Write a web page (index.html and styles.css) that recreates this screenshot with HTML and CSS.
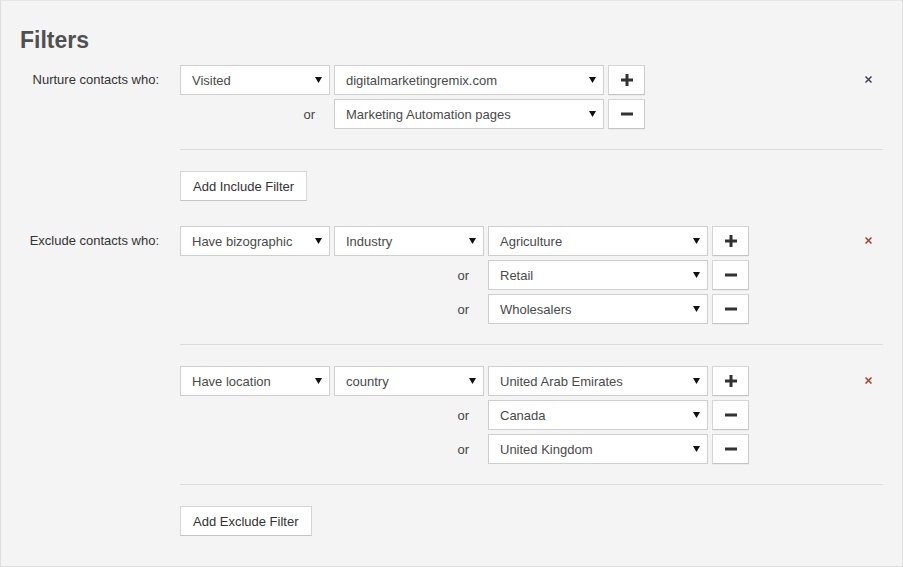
FILE: index.html
```html
<!DOCTYPE html>
<html>
<head>
<meta charset="utf-8">
<link rel="stylesheet" href="styles.css">
</head>
<body>
<div class="page">
  <h1 class="title">Filters</h1>

  <section class="section">
    <div class="label">Nurture contacts who:</div>
    <div class="content">
      <div class="group">
        <div class="grid grid-two">
          <div class="select"><span>Visited</span><svg class="arrow" width="7" height="6" viewBox="0 0 7 6"><polygon points="0,0 7,0 3.5,6" fill="#111"/></svg></div>
          <div class="select"><span>digitalmarketingremix.com</span><svg class="arrow" width="7" height="6" viewBox="0 0 7 6"><polygon points="0,0 7,0 3.5,6" fill="#111"/></svg></div>
          <button class="icon-btn"><svg width="12" height="12" viewBox="0 0 12 12"><rect x="4.5" y="0" width="3" height="12" fill="#333"/><rect x="0" y="4.5" width="12" height="3" fill="#333"/></svg></button>

          <div class="or">or</div>
          <div class="select"><span>Marketing Automation pages</span><svg class="arrow" width="7" height="6" viewBox="0 0 7 6"><polygon points="0,0 7,0 3.5,6" fill="#111"/></svg></div>
          <button class="icon-btn"><svg width="12" height="12" viewBox="0 0 12 12"><rect x="0" y="4.5" width="12" height="3" fill="#333"/></svg></button>
        </div>
        <div class="remove remove-dark"><svg width="7" height="7" viewBox="0 0 7 7"><path d="M0.5 0.5 L6.5 6.5 M6.5 0.5 L0.5 6.5" stroke="currentColor" stroke-width="1.5"/></svg></div>
      </div>
      <hr class="sep">
      <button class="text-btn">Add Include Filter</button>
    </div>
  </section>

  <section class="section section-exclude">
    <div class="label">Exclude contacts who:</div>
    <div class="content">
      <div class="group">
        <div class="grid grid-three">
          <div class="select"><span>Have bizographic</span><svg class="arrow" width="7" height="6" viewBox="0 0 7 6"><polygon points="0,0 7,0 3.5,6" fill="#111"/></svg></div>
          <div class="select"><span>Industry</span><svg class="arrow" width="7" height="6" viewBox="0 0 7 6"><polygon points="0,0 7,0 3.5,6" fill="#111"/></svg></div>
          <div class="select"><span>Agriculture</span><svg class="arrow" width="7" height="6" viewBox="0 0 7 6"><polygon points="0,0 7,0 3.5,6" fill="#111"/></svg></div>
          <button class="icon-btn"><svg width="12" height="12" viewBox="0 0 12 12"><rect x="4.5" y="0" width="3" height="12" fill="#333"/><rect x="0" y="4.5" width="12" height="3" fill="#333"/></svg></button>

          <div class="or or-wide">or</div>
          <div class="select"><span>Retail</span><svg class="arrow" width="7" height="6" viewBox="0 0 7 6"><polygon points="0,0 7,0 3.5,6" fill="#111"/></svg></div>
          <button class="icon-btn"><svg width="12" height="12" viewBox="0 0 12 12"><rect x="0" y="4.5" width="12" height="3" fill="#333"/></svg></button>

          <div class="or or-wide">or</div>
          <div class="select"><span>Wholesalers</span><svg class="arrow" width="7" height="6" viewBox="0 0 7 6"><polygon points="0,0 7,0 3.5,6" fill="#111"/></svg></div>
          <button class="icon-btn"><svg width="12" height="12" viewBox="0 0 12 12"><rect x="0" y="4.5" width="12" height="3" fill="#333"/></svg></button>
        </div>
        <div class="remove"><svg width="7" height="7" viewBox="0 0 7 7"><path d="M0.5 0.5 L6.5 6.5 M6.5 0.5 L0.5 6.5" stroke="currentColor" stroke-width="1.5"/></svg></div>
      </div>
      <hr class="sep">
      <div class="group">
        <div class="grid grid-three">
          <div class="select"><span>Have location</span><svg class="arrow" width="7" height="6" viewBox="0 0 7 6"><polygon points="0,0 7,0 3.5,6" fill="#111"/></svg></div>
          <div class="select"><span>country</span><svg class="arrow" width="7" height="6" viewBox="0 0 7 6"><polygon points="0,0 7,0 3.5,6" fill="#111"/></svg></div>
          <div class="select"><span>United Arab Emirates</span><svg class="arrow" width="7" height="6" viewBox="0 0 7 6"><polygon points="0,0 7,0 3.5,6" fill="#111"/></svg></div>
          <button class="icon-btn"><svg width="12" height="12" viewBox="0 0 12 12"><rect x="4.5" y="0" width="3" height="12" fill="#333"/><rect x="0" y="4.5" width="12" height="3" fill="#333"/></svg></button>

          <div class="or or-wide">or</div>
          <div class="select"><span>Canada</span><svg class="arrow" width="7" height="6" viewBox="0 0 7 6"><polygon points="0,0 7,0 3.5,6" fill="#111"/></svg></div>
          <button class="icon-btn"><svg width="12" height="12" viewBox="0 0 12 12"><rect x="0" y="4.5" width="12" height="3" fill="#333"/></svg></button>

          <div class="or or-wide">or</div>
          <div class="select"><span>United Kingdom</span><svg class="arrow" width="7" height="6" viewBox="0 0 7 6"><polygon points="0,0 7,0 3.5,6" fill="#111"/></svg></div>
          <button class="icon-btn"><svg width="12" height="12" viewBox="0 0 12 12"><rect x="0" y="4.5" width="12" height="3" fill="#333"/></svg></button>
        </div>
        <div class="remove"><svg width="7" height="7" viewBox="0 0 7 7"><path d="M0.5 0.5 L6.5 6.5 M6.5 0.5 L0.5 6.5" stroke="currentColor" stroke-width="1.5"/></svg></div>
      </div>
      <hr class="sep">
      <button class="text-btn">Add Exclude Filter</button>
    </div>
  </section>
</div>
</body>
</html>
```

FILE: styles.css
```css
* { box-sizing: border-box; }

html, body {
  margin: 0;
  padding: 0;
  background: #f4f4f4;
}

body {
  font-family: "Liberation Sans", Arial, sans-serif;
  font-size: 13px;
  color: #333;
}

.page {
  width: 903px;
  height: 567px;
  border: 1px solid #dedede;
  border-top-color: #e6e6e6;
  background: #f4f4f4;
  padding: 25px 19px 0 19px;
}

.title {
  margin: 0 0 11px 0;
  font-size: 23px;
  line-height: 28px;
  font-weight: bold;
  color: #505050;
}

.section {
  display: flex;
  align-items: flex-start;
}

.section-exclude {
  margin-top: 25px;
}

.label {
  width: 160px;
  flex: none;
  padding-right: 21px;
  text-align: right;
  line-height: 30px;
  color: #333;
}

.content {
  flex: 1;
  min-width: 0;
}

.group {
  display: flex;
  align-items: flex-start;
}

.grid {
  display: grid;
  row-gap: 4px;
  column-gap: 4px;
  grid-auto-rows: 30px;
}

.grid-two {
  grid-template-columns: 150px 270px 37px;
}

.grid-three {
  grid-template-columns: 150px 150px 220px 37px;
}

.or {
  text-align: right;
  padding: 1px 15px 0 0;
  line-height: 30px;
  color: #444;
}

.or-wide {
  grid-column: span 2;
}

.select {
  display: flex;
  align-items: center;
  justify-content: space-between;
  height: 30px;
  background: #fff;
  border: 1px solid #cfcfcf;
  padding: 0 7px 0 11px;
  color: #4a4a4a;
  white-space: nowrap;
}

.arrow {
  flex: none;
  display: block;
}

.icon-btn {
  display: flex;
  align-items: center;
  justify-content: center;
  width: 37px;
  height: 30px;
  padding: 0;
  margin: 0;
  background: #fff;
  border: 1px solid #d6d6d6;
  border-bottom-color: #c4c4c4;
  border-right-color: #cdcdcd;
  box-shadow: 0 1px 0 rgba(0, 0, 0, 0.03);
}

.icon-btn svg {
  display: block;
}

.remove {
  margin-left: auto;
  width: 30px;
  height: 30px;
  display: flex;
  align-items: center;
  justify-content: center;
  color: #b03a30;
  padding-bottom: 1px;
}

.remove-dark {
  color: #3b4250;
}

.remove svg {
  display: block;
}

.sep {
  border: 0;
  border-top: 1px solid #dcdcdc;
  height: 0;
  margin: 20px 0 21px 0;
}

.text-btn {
  display: block;
  height: 30px;
  padding: 0 12px;
  margin: 0;
  background: #fff;
  border: 1px solid #d6d6d6;
  border-bottom-color: #c4c4c4;
  font-family: "Liberation Sans", Arial, sans-serif;
  font-size: 13px;
  color: #333;
}
```
